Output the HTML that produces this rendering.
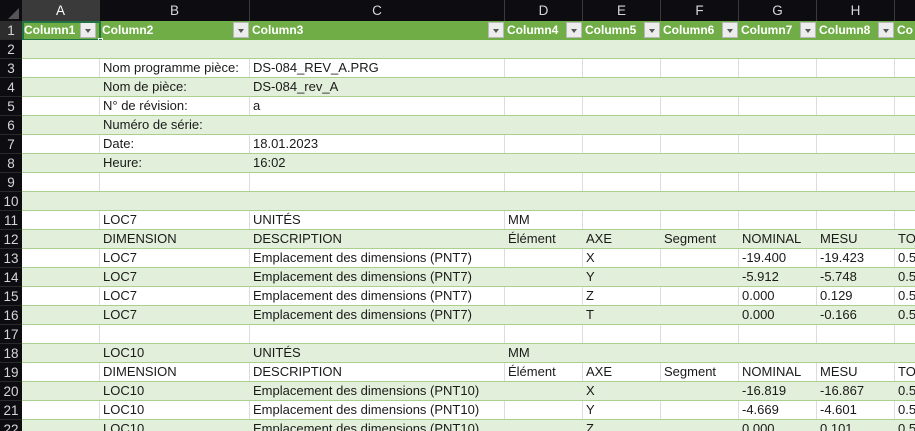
<!DOCTYPE html>
<html><head><meta charset="utf-8"><style>
*{margin:0;padding:0;box-sizing:border-box}
html,body{width:915px;height:431px;overflow:hidden}
body{background:#fff;font-family:"Liberation Sans",Arial,sans-serif;font-size:13px;color:#1a1a1a;position:relative}
.hdr{position:absolute;top:0;left:0;height:21px;width:915px;background:#0d0d11}
.hc{position:absolute;top:0;height:21px;color:#d6d6d6;text-align:center;line-height:21px;font-size:13.5px;border-right:1px solid #3a3a3a}
.rn{position:absolute;left:0;width:22px;height:19px;background:#0d0d11;color:#d6d6d6;text-align:center;line-height:19px;font-size:13.5px;border-bottom:1px solid #2a2a2a}
.row{position:absolute;left:22px;width:893px;height:19px;border-bottom:1px solid #a9d08e}
.g{background:#e2efda}
.c{position:absolute;top:0;height:18px;line-height:18px;padding-left:3px;white-space:nowrap;overflow:hidden}
.w .c{border-right:1px solid #dcdcdc}
.h1{background:#70ad47;border-bottom:none}
.h1 .c{color:#fff;font-weight:bold;font-size:12px;line-height:19px;height:19px;padding-left:2px}
.dd{position:absolute;top:1px;width:16px;height:16px;background:#ececec;border:1px solid #b8b8b8}
.dd:after{content:"";position:absolute;left:4px;top:6px;border-left:3.5px solid transparent;border-right:3.5px solid transparent;border-top:4px solid #555}
</style></head><body>
<div class="hdr">
<div style="position:absolute;left:8px;top:8px;width:0;height:0;border-left:11px solid transparent;border-bottom:11px solid #555"></div>
<div class="hc" style="left:22px;width:78px;background:#3a3a3a;color:#fff">A</div>
<div class="hc" style="left:100px;width:150px">B</div>
<div class="hc" style="left:250px;width:255px">C</div>
<div class="hc" style="left:505px;width:78px">D</div>
<div class="hc" style="left:583px;width:78px">E</div>
<div class="hc" style="left:661px;width:78px">F</div>
<div class="hc" style="left:739px;width:78px">G</div>
<div class="hc" style="left:817px;width:78px">H</div>
<div class="hc" style="left:895px;width:78px"></div>
</div>

<div class="rn" style="top:21px;background:#2d2d2d">1</div>
<div class="row h1" style="top:21px">
<div class="c" style="left:0;width:78px">Column1</div><div class="dd" style="left:58px"></div>
<div class="c" style="left:78px;width:150px">Column2</div><div class="dd" style="left:211px"></div>
<div class="c" style="left:228px;width:255px">Column3</div><div class="dd" style="left:466px"></div>
<div class="c" style="left:483px;width:78px">Column4</div><div class="dd" style="left:544px"></div>
<div class="c" style="left:561px;width:78px">Column5</div><div class="dd" style="left:622px"></div>
<div class="c" style="left:639px;width:78px">Column6</div><div class="dd" style="left:700px"></div>
<div class="c" style="left:717px;width:78px">Column7</div><div class="dd" style="left:778px"></div>
<div class="c" style="left:795px;width:78px">Column8</div><div class="dd" style="left:856px"></div>
<div class="c" style="left:873px;width:40px">Co</div>
</div>
<div style="position:absolute;left:22px;top:21px;width:79px;height:20px;border:2px solid #217346"></div>
<div style="position:absolute;left:98px;top:38px;width:5px;height:5px;background:#217346;border:1px solid #fff"></div>

<div id="rows"></div>
<script>
var data={
3:["","Nom programme pièce:","DS-084_REV_A.PRG"],
4:["","Nom de pièce:","DS-084_rev_A"],
5:["","N° de révision:","a"],
6:["","Numéro de série:",""],
7:["","Date:","18.01.2023"],
8:["","Heure:","16:02"],
11:["","LOC7","UNITÉS","MM"],
12:["","DIMENSION","DESCRIPTION","Élément","AXE","Segment","NOMINAL","MESU","TO"],
13:["","LOC7","Emplacement des dimensions (PNT7)","","X","","-19.400","-19.423","0.5"],
14:["","LOC7","Emplacement des dimensions (PNT7)","","Y","","-5.912","-5.748","0.5"],
15:["","LOC7","Emplacement des dimensions (PNT7)","","Z","","0.000","0.129","0.5"],
16:["","LOC7","Emplacement des dimensions (PNT7)","","T","","0.000","-0.166","0.5"],
18:["","LOC10","UNITÉS","MM"],
19:["","DIMENSION","DESCRIPTION","Élément","AXE","Segment","NOMINAL","MESU","TO"],
20:["","LOC10","Emplacement des dimensions (PNT10)","","X","","-16.819","-16.867","0.5"],
21:["","LOC10","Emplacement des dimensions (PNT10)","","Y","","-4.669","-4.601","0.5"],
22:["","LOC10","Emplacement des dimensions (PNT10)","","Z","","0.000","0.101","0.5"]
};
var L=[0,78,228,483,561,639,717,795,873],W=[78,150,255,78,78,78,78,78,60];
var h="";
for(var r=2;r<=22;r++){
 var t=21+(r-1)*19;
 h+='<div class="rn" style="top:'+t+'px">'+r+'</div>';
 h+='<div class="row '+(r%2==0?'g':'w')+'" style="top:'+t+'px">';
 var d=data[r]||[];
 for(var i=0;i<9;i++){h+='<div class="c" style="left:'+L[i]+'px;width:'+W[i]+'px">'+(d[i]||'')+'</div>';}
 h+='</div>';
}
document.getElementById('rows').innerHTML=h;
</script>
</body></html>
